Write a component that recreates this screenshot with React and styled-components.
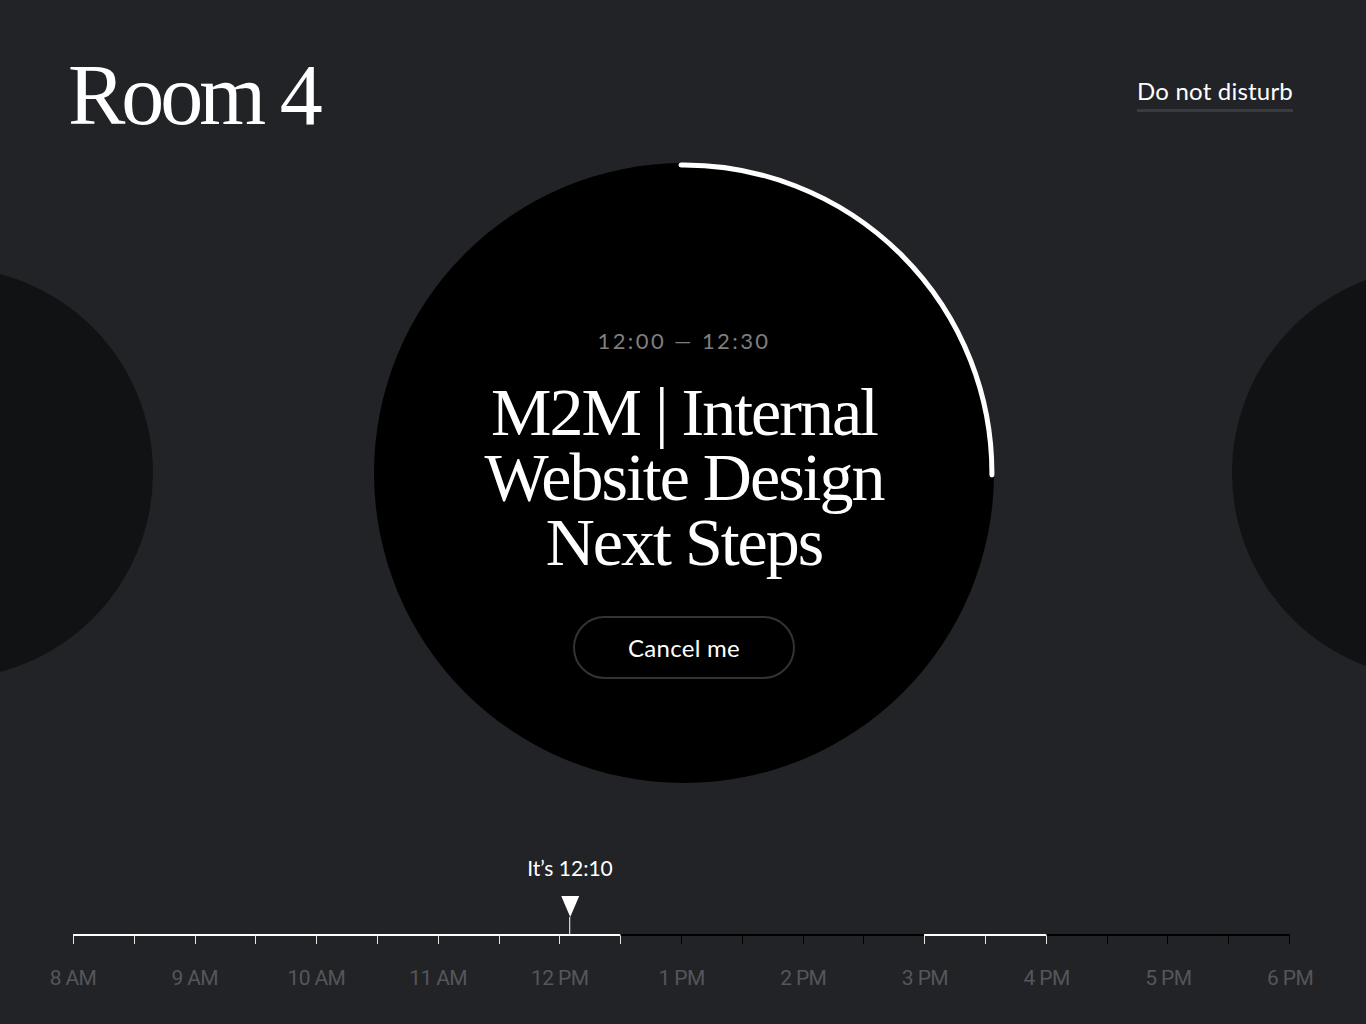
import React from "react";
import styled, { createGlobalStyle } from "styled-components";

const GlobalStyle = createGlobalStyle`
  html, body { margin: 0; padding: 0; background: #222327; }
  * { box-sizing: border-box; }
`;

const Page = styled.div`
  width: 1366px;
  height: 1024px;
  overflow: hidden;
  background: #222327;
  display: flex;
  flex-direction: column;
  font-family: "Lato", "Inter", sans-serif;
  color: #fff;
`;

const Header = styled.header`
  display: flex;
  justify-content: space-between;
  align-items: flex-start;
  padding: 52px 73px 0 68px;
`;

const RoomTitle = styled.h1`
  margin: 0;
  font-family: "Liberation Serif", "DejaVu Serif", serif;
  font-weight: 400;
  font-size: 86px;
  line-height: 86px;
  letter-spacing: -4px;
  color: #fff;
`;

const DndLink = styled.a`
  margin-top: 24px;
  font-size: 24px;
  line-height: 29px;
  letter-spacing: 0.2px;
  color: #fff;
  text-decoration: none;
  padding-bottom: 4px;
  border-bottom: 3px solid #3a3b40;
`;

const Stage = styled.section`
  display: flex;
  align-items: center;
  margin-top: 25px;
  margin-left: -259px;
`;

const SideCircle = styled.div`
  flex: none;
  width: 412px;
  height: 412px;
  border-radius: 50%;
  background: #111214;
  margin-left: ${(p) => p.$ml || 0}px;
  margin-right: ${(p) => p.$mr || 0}px;
`;

const MainCircle = styled.div`
  position: relative;
  flex: none;
  width: 620px;
  height: 620px;
  border-radius: 50%;
  background: #000;
  display: flex;
  flex-direction: column;
  align-items: center;
  padding-top: 166px;
`;

const Progress = styled.svg`
  position: absolute;
  left: 0;
  top: 0;
  overflow: visible;
`;

const TimeRange = styled.div`
  font-size: 22px;
  line-height: 24px;
  letter-spacing: 2.4px;
  color: #7f7f7f;
`;

const EventTitle = styled.h2`
  margin: 27px 0 0;
  font-family: "Liberation Serif", "DejaVu Serif", serif;
  font-weight: 400;
  font-size: 68px;
  line-height: 65px;
  letter-spacing: -2px;
  text-align: center;
  color: #fff;
`;

const CancelButton = styled.button`
  margin-top: 41px;
  width: 222px;
  height: 63px;
  border-radius: 32px;
  border: 2px solid #333335;
  background: transparent;
  color: #fff;
  font-family: "Lato", "Inter", sans-serif;
  font-size: 24px;
  letter-spacing: 0.3px;
  cursor: pointer;
`;

const Timeline = styled.section`
  margin-top: 151px;
  padding: 0 76px 0 73px;
`;

const TrackWrap = styled.div`
  position: relative;
`;

const Track = styled.div`
  display: flex;
  height: 10px;
`;

const Segment = styled.div`
  flex: 1;
  border-top: 2px solid ${(p) => (p.$active ? "#ffffff" : "#000000")};
  border-left: 1px solid ${(p) => (p.$tick ? "#e6e6e6" : "#000000")};
  ${(p) => (p.$last ? "border-right: 1px solid #000000;" : "")}
`;

const NowMarker = styled.div`
  position: absolute;
  bottom: 100%;
  display: flex;
  flex-direction: column;
  align-items: center;
  transform: translateX(-50%);
`;

const NowLabel = styled.div`
  font-size: 21px;
  line-height: 24px;
  color: #fff;
  white-space: nowrap;
  margin-bottom: 16px;
`;

const Stem = styled.div`
  width: 1px;
  height: 17px;
  background: #fff;
`;

const Labels = styled.div`
  display: flex;
  margin: 22px -60.85px 0;
`;

const HourLabel = styled.div`
  flex: 1;
  text-align: center;
  font-family: "Roboto", "Lato", sans-serif;
  font-size: 21px;
  line-height: 24px;
  letter-spacing: -0.6px;
  color: #55565a;
`;

const hours = ["8 AM", "9 AM", "10 AM", "11 AM", "12 PM", "1 PM", "2 PM", "3 PM", "4 PM", "5 PM", "6 PM"];

// half-hour segments from 8:00 to 18:00; booked ranges in minutes after 8:00
const booked = [
  [0, 270],
  [420, 480],
];
const segments = Array.from({ length: 20 }, (_, i) => {
  const start = i * 30;
  return booked.some(([a, b]) => start >= a && start < b);
});

const nowFraction = 497 / 1217;

export default function App() {
  return (
    <>
      <GlobalStyle />
      <Page>
        <Header>
          <RoomTitle>Room 4</RoomTitle>
          <DndLink href="#">Do not disturb</DndLink>
        </Header>

        <Stage>
          <SideCircle $mr={221} />
          <MainCircle>
            <Progress width="620" height="620" viewBox="0 0 620 620">
              <path
                d="M 307 2.02 A 308 308 0 0 1 617.9 312"
                fill="none"
                stroke="#fff"
                strokeWidth="5"
                strokeLinecap="round"
              />
            </Progress>
            <TimeRange>12:00 — 12:30</TimeRange>
            <EventTitle>
              M2M | Internal
              <br />
              Website Design
              <br />
              Next Steps
            </EventTitle>
            <CancelButton>Cancel me</CancelButton>
          </MainCircle>
          <SideCircle $ml={238} />
        </Stage>

        <Timeline>
          <TrackWrap>
            <Track>
              {segments.map((active, i) => (
                <Segment
                  key={i}
                  $active={active}
                  $tick={active || (i > 0 && segments[i - 1])}
                  $last={i === segments.length - 1}
                />
              ))}
            </Track>
            <NowMarker style={{ left: `${nowFraction * 100}%` }}>
              <NowLabel>It’s 12:10</NowLabel>
              <svg width="18" height="21" viewBox="0 0 18 21">
                <polygon points="0,0 18,0 9,21" fill="#fff" />
              </svg>
              <Stem />
            </NowMarker>
          </TrackWrap>
          <Labels>
            {hours.map((h) => (
              <HourLabel key={h}>{h}</HourLabel>
            ))}
          </Labels>
        </Timeline>
      </Page>
    </>
  );
}
